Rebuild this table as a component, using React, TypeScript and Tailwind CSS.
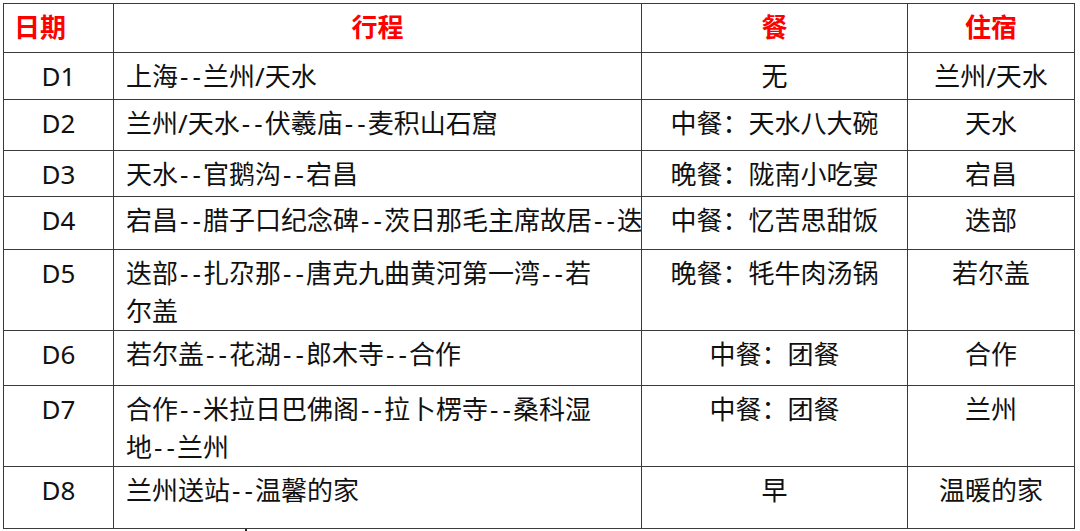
import React from 'react';

type Row = {
  day: string;
  route: string[];
  meal: string;
  stay: string;
  h: string;
  clip?: boolean;
};

const rows: Row[] = [
  { day: 'D1', route: ['上海--兰州/天水'], meal: '无', stay: '兰州/天水', h: 'h-[47px]' },
  { day: 'D2', route: ['兰州/天水--伏羲庙--麦积山石窟'], meal: '中餐：天水八大碗', stay: '天水', h: 'h-[51px]' },
  { day: 'D3', route: ['天水--官鹅沟--宕昌'], meal: '晚餐：陇南小吃宴', stay: '宕昌', h: 'h-[46px]' },
  { day: 'D4', route: ['宕昌--腊子口纪念碑--茨日那毛主席故居--迭部'], meal: '中餐：忆苦思甜饭', stay: '迭部', h: 'h-[53px]', clip: true },
  { day: 'D5', route: ['迭部--扎尕那--唐克九曲黄河第一湾--若', '尔盖'], meal: '晚餐：牦牛肉汤锅', stay: '若尔盖', h: 'h-[77px]' },
  { day: 'D6', route: ['若尔盖--花湖--郎木寺--合作'], meal: '中餐：团餐', stay: '合作', h: 'h-[55px]' },
  { day: 'D7', route: ['合作--米拉日巴佛阁--拉卜楞寺--桑科湿', '地--兰州'], meal: '中餐：团餐', stay: '兰州', h: 'h-[79px]' },
  { day: 'D8', route: ['兰州送站--温馨的家'], meal: '早', stay: '温暖的家', h: 'h-[62px]' },
];

// each hyphen a bit wider, like the original font's
const Dash = () => <span className="inline-block w-[12.5px] text-center">-</span>;

const Dashed = ({ text }: { text: string }) => {
  const parts = text.split('--');
  return (
    <>
      {parts.map((p, i) => (
        <React.Fragment key={i}>
          {i > 0 && (
            <>
              <Dash />
              <Dash />
            </>
          )}
          {p}
        </React.Fragment>
      ))}
    </>
  );
};

const cell = 'border border-[#3a3a3a] align-top pt-[4px] pb-0 leading-[38px]';

export default function App() {
  return (
    <div
      className="w-[1080px] h-[531px] bg-white overflow-hidden pt-[3px] pl-[3px] text-[26px] text-[#111]"
      style={{ fontFamily: '"Noto Sans", "Noto Sans CJK SC", sans-serif' }}
    >
      <table className="table-fixed border-collapse w-[1071px]">
        <colgroup>
          <col className="w-[110px]" />
          <col className="w-[528px]" />
          <col className="w-[266px]" />
          <col className="w-[167px]" />
        </colgroup>
        <thead>
          <tr className="h-[49px] text-[#ff0000] font-bold">
            <th className={`${cell} text-left pl-[10px]`}>日期</th>
            <th className={`${cell} text-center`}>行程</th>
            <th className={`${cell} text-center`}>餐</th>
            <th className={`${cell} text-center`}>住宿</th>
          </tr>
        </thead>
        <tbody>
          {rows.map((r) => (
            <tr key={r.day} className={r.h}>
              <td className={`${cell} text-center`}>{r.day}</td>
              <td className={`${cell} pl-[12px] pr-0 ${r.clip ? 'whitespace-nowrap overflow-hidden' : ''}`}>
                {r.route.map((line, i) => (
                  <div key={i}>
                    <Dashed text={line} />
                  </div>
                ))}
              </td>
              <td className={`${cell} text-center`}>{r.meal}</td>
              <td className={`${cell} text-center`}>{r.stay}</td>
            </tr>
          ))}
        </tbody>
      </table>
      <div className="ml-[242px] w-[2px] h-[5px] bg-[#222]" />
    </div>
  );
}
